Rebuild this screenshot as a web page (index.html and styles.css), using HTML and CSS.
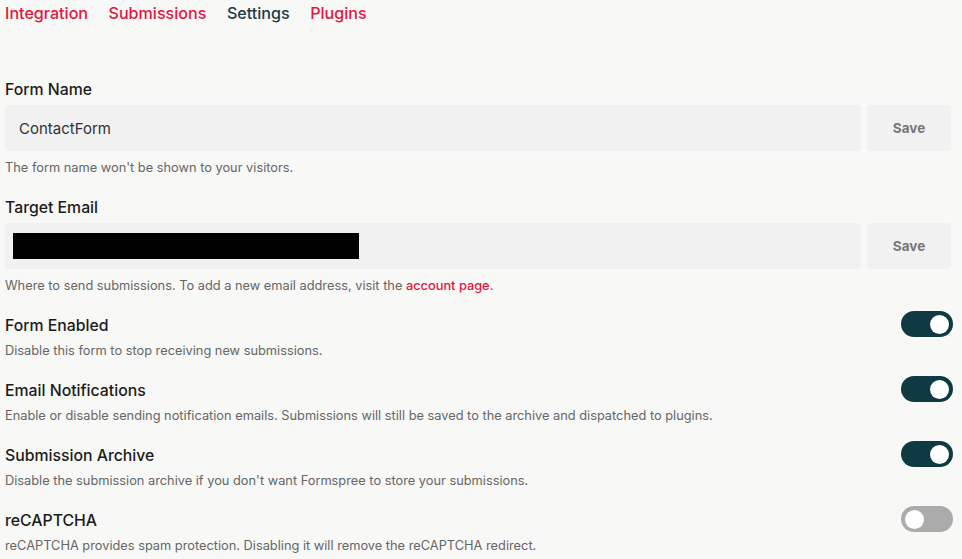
FILE: index.html
```html
<!DOCTYPE html>
<html>
<head>
<meta charset="utf-8">
<link rel="stylesheet" href="styles.css">
</head>
<body>
<div class="page">
  <nav class="tabs">
    <a class="tab">Integration</a>
    <a class="tab">Submissions</a>
    <a class="tab active">Settings</a>
    <a class="tab">Plugins</a>
  </nav>

  <section class="field first">
    <div class="label">Form Name</div>
    <div class="input-row">
      <div class="input">ContactForm</div>
      <button class="save">Save</button>
    </div>
    <div class="help">The form name won't be shown to your visitors.</div>
  </section>

  <section class="field last">
    <div class="label">Target Email</div>
    <div class="input-row">
      <div class="input"><span class="redact"></span></div>
      <button class="save">Save</button>
    </div>
    <div class="help">Where to send submissions. To add a new email address, visit the <a class="link">account page</a>.</div>
  </section>

  <section class="toggle-row">
    <div class="text">
      <div class="label">Form Enabled</div>
      <div class="desc">Disable this form to stop receiving new submissions.</div>
    </div>
    <span class="switch on"><span class="knob"></span></span>
  </section>

  <section class="toggle-row">
    <div class="text">
      <div class="label">Email Notifications</div>
      <div class="desc">Enable or disable sending notification emails. Submissions will still be saved to the archive and dispatched to plugins.</div>
    </div>
    <span class="switch on"><span class="knob"></span></span>
  </section>

  <section class="toggle-row">
    <div class="text">
      <div class="label">Submission Archive</div>
      <div class="desc">Disable the submission archive if you don't want Formspree to store your submissions.</div>
    </div>
    <span class="switch on"><span class="knob"></span></span>
  </section>

  <section class="toggle-row">
    <div class="text">
      <div class="label">reCAPTCHA</div>
      <div class="desc">reCAPTCHA provides spam protection. Disabling it will remove the reCAPTCHA redirect.</div>
    </div>
    <span class="switch off"><span class="knob"></span></span>
  </section>
</div>
</body>
</html>
```

FILE: styles.css
```css
html, body {
  margin: 0;
  padding: 0;
  background: #f8f8f7;
}
body {
  font-family: Inter, "Noto Sans", "Liberation Sans", sans-serif;
  color: #1b1b1b;
  overflow: hidden;
}
.page {
  padding: 0 9px 0 5px;
}
.tabs {
  display: flex;
  gap: 20.5px;
  height: 26px;
  align-items: center;
}
.tab {
  font-size: 16.1px;
  font-weight: 500;
  color: #e3173e;
  line-height: 26px;
}
.tab.active {
  color: #1d3a45;
}
.field {
  display: flex;
  flex-direction: column;
}
.field.first {
  margin-top: 55px;
}
.label {
  font-size: 15.8px;
  font-weight: 500;
  line-height: 18px;
  color: #1b1b1b;
}
.input-row {
  display: flex;
  gap: 6px;
  margin-top: 6px;
  margin-right: 2px;
}
.input {
  flex: 1;
  height: 46px;
  background: #f1f1f1;
  border-radius: 4px;
  display: flex;
  align-items: center;
  padding-left: 14px;
  font-size: 15px;
  color: #333;
}
.redact {
  display: block;
  margin-left: -6px;
  width: 346px;
  height: 26px;
  background: #000;
}
.save {
  width: 84px;
  height: 46px;
  border: none;
  border-radius: 4px;
  background: #f1f1f1;
  color: #777;
  font-family: inherit;
  font-size: 13.5px;
  font-weight: 700;
  padding: 0;
}
.help {
  font-size: 12.8px;
  line-height: 16px;
  color: #666;
  margin-top: 9px;
  margin-bottom: 23px;
}
.field.last .help {
  margin-bottom: 16px;
}
.link {
  color: #e3173e;
  font-weight: 500;
}
.toggle-row {
  display: flex;
  justify-content: space-between;
  align-items: flex-start;
  height: 65px;
}
.text .label {
  margin-top: 7px;
}
.desc {
  font-size: 12.8px;
  line-height: 16px;
  color: #666;
  margin-top: 8px;
}
.switch {
  position: relative;
  display: block;
  width: 52px;
  height: 26px;
  border-radius: 13px;
  margin-top: 1px;
  flex: none;
}
.switch.on {
  background: #0f3a44;
}
.switch.off {
  background: #ababab;
}
.knob {
  position: absolute;
  top: 3.5px;
  width: 19px;
  height: 19px;
  border-radius: 50%;
  background: #fff;
}
.switch.on .knob {
  right: 4px;
}
.switch.off .knob {
  left: 3.5px;
}
```
